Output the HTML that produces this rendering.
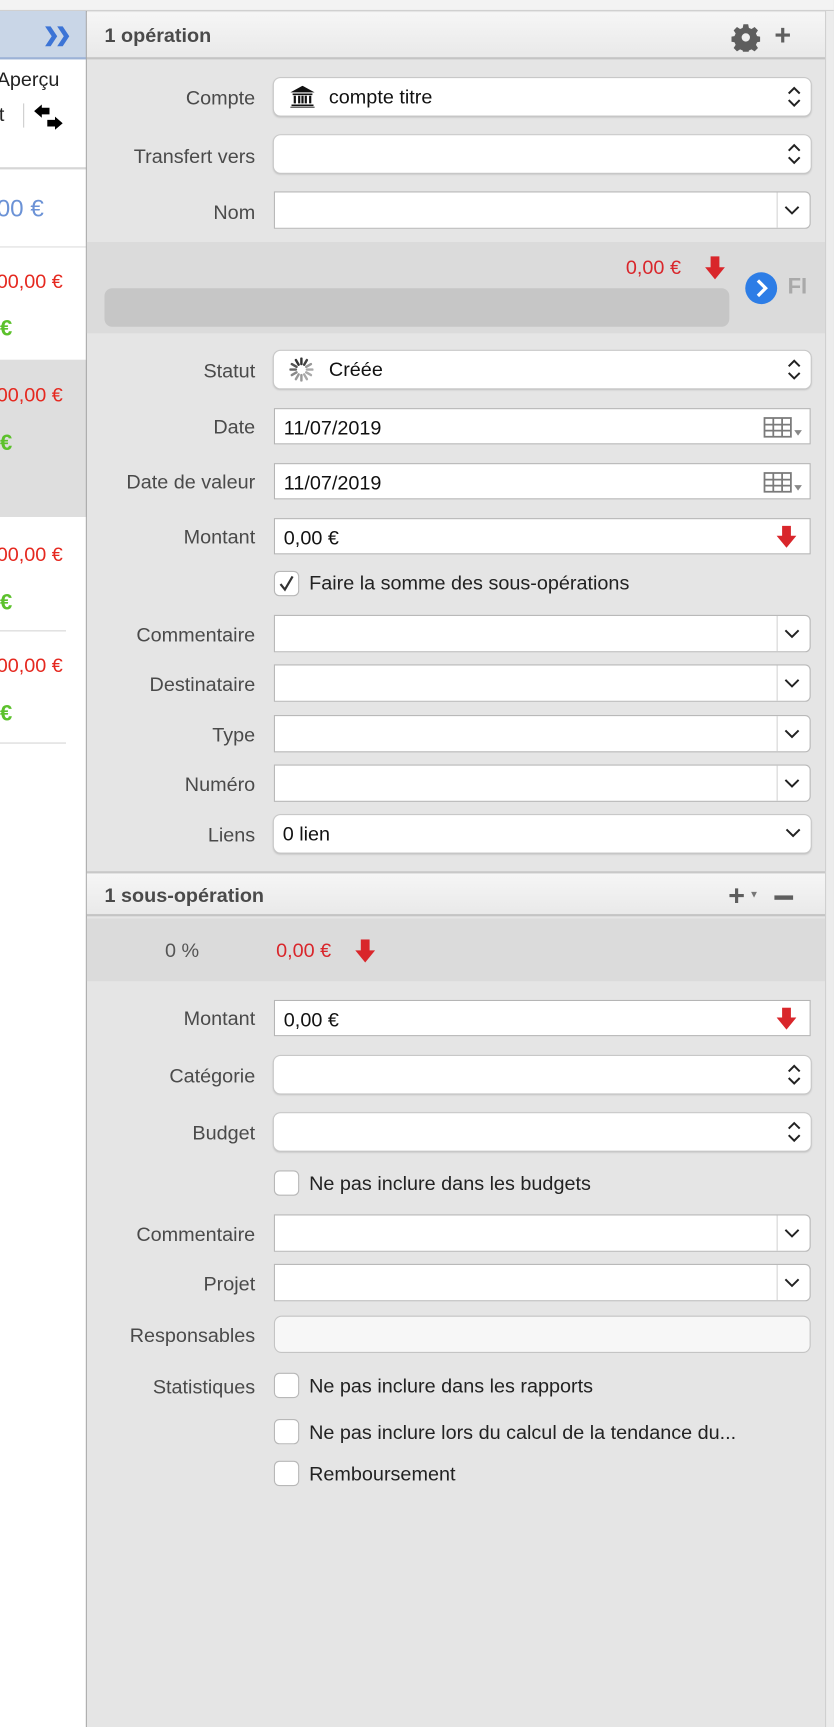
<!DOCTYPE html>
<html><head><meta charset="utf-8"><style>
*{box-sizing:border-box;margin:0;padding:0}
html,body{width:834px;height:1726px;overflow:hidden;background:#e5e5e5;font-family:"Liberation Sans",sans-serif}
#w{position:absolute;left:0;top:0;width:758px;height:1570px;transform:scale(1.1);transform-origin:0 0}
.a{position:absolute}
.lbl{position:absolute;right:526px;font-size:18px;color:#4a4a4a;text-align:right;white-space:nowrap;margin-top:2px}
.f{position:absolute;left:249px;width:488px;height:34px;background:#fff;font-size:18px;color:#111;padding-left:8px;line-height:34px}
.pop{border-radius:6px;box-shadow:0 0 0 1px #c8c8c8,0 1px 2px rgba(0,0,0,.25)}
.cmb{border:1px solid #b9b9b9;border-radius:0 5px 5px 0}
.cmb:after{content:"";position:absolute;right:29px;top:0;bottom:0;border-left:1px solid #d4d4d4}
.txt{border:1px solid #b5b5b5;height:33px}
.ud{position:absolute;right:8px;top:6px}
.dn{position:absolute;right:9px;top:11px}
.cb{position:absolute;left:249px;width:23px;height:23px;background:#fff;border:1px solid #b8b8b8;border-radius:5px}
.ct{position:absolute;left:281px;font-size:18px;color:#222;margin-top:1px}
</style></head><body><div id="w">
<div class="a" style="left:0;top:0;width:758px;height:10px;background:#f3f3f3;border-bottom:1px solid #d0d0d0"></div>
<div class="a" style="left:0;top:10px;width:79px;height:1560px;background:#fff"></div>
<div class="a" style="left:0;top:10px;width:79px;height:44px;background:#c9d6e7;border-bottom:2px solid #9cb2d6"></div>
<svg class="a" style="left:40px;top:23px" width="24" height="20" viewBox="0 0 24 20"><path d="M1 1h5l6 9-6 9H1l6-9z M12 1h5l6 9-6 9h-5l6-9z" fill="#3c74d6"/></svg>
<div class="a" style="left:-3px;top:62px;font-size:18px;color:#222">Aperçu</div>
<div class="a" style="left:-1px;top:94px;font-size:18px;color:#222">t</div>
<div class="a" style="left:21px;top:94px;width:1px;height:22px;background:#ccc"></div>
<svg class="a" style="left:31px;top:95px" width="26" height="24" viewBox="0 0 26 24"><path d="M0 6 L7 0 V3 H14 V9 H7 V12Z M26 17 L19 11 V14 H12 V20 H19 V23Z" fill="#000"/></svg>
<div class="a" style="left:0;top:152px;width:79px;height:2px;background:#d6d6d6"></div>
<div class="a" style="left:-3px;top:177px;font-size:22px;color:#6b92d6">00 €</div>
<div class="a" style="left:0;top:224px;width:79px;height:1px;background:#dcdcdc"></div>
<div class="a" style="left:-3px;top:246px;font-size:18px;color:#e5281f">00,00 €</div>
<div class="a" style="left:0;top:288px;font-size:20px;font-weight:bold;color:#5cc12c">€</div>
<div class="a" style="left:0;top:327px;width:79px;height:143px;background:#dedede"></div>
<div class="a" style="left:-3px;top:349px;font-size:18px;color:#e5281f">00,00 €</div>
<div class="a" style="left:0;top:392px;font-size:20px;font-weight:bold;color:#5cc12c">€</div>
<div class="a" style="left:-3px;top:494px;font-size:18px;color:#e5281f">00,00 €</div>
<div class="a" style="left:0;top:537px;font-size:20px;font-weight:bold;color:#5cc12c">€</div>
<div class="a" style="left:0;top:573px;width:60px;height:1px;background:#d6d6d6"></div>
<div class="a" style="left:-3px;top:595px;font-size:18px;color:#e5281f">00,00 €</div>
<div class="a" style="left:0;top:638px;font-size:20px;font-weight:bold;color:#5cc12c">€</div>
<div class="a" style="left:0;top:675px;width:60px;height:1px;background:#d6d6d6"></div>
<div class="a" style="left:78px;top:10px;width:1px;height:1560px;background:#a8a8a8"></div>
<div class="a" style="left:750px;top:10px;width:8px;height:1560px;background:#ececec;border-left:1px solid #d0d0d0"></div>
<div class="a" style="left:79px;top:11px;width:671px;height:43px;background:linear-gradient(#f6f6f6,#e9e9e9);border-bottom:2px solid #c4c4c4"></div>
<div class="a" style="left:95px;top:22px;font-size:18px;font-weight:bold;color:#4a4a4a">1 opération</div>
<svg class="a" style="left:665px;top:21px" width="26" height="26" viewBox="0 0 24 24"><path fill="#5e5e5e" d="M10 1h4l.6 3 2.2 1 2.6-1.7 2.8 2.8-1.7 2.6 1 2.2 3 .6v4l-3 .6-1 2.2 1.7 2.6-2.8 2.8-2.6-1.7-2.2 1-.6 3h-4l-.6-3-2.2-1-2.6 1.7-2.8-2.8 1.7-2.6-1-2.2-3-.6v-4l3-.6 1-2.2-1.7-2.6 2.8-2.8 2.6 1.7 2.2-1zM12 8.5a3.5 3.5 0 100 7 3.5 3.5 0 000-7z"/></svg>
<div class="a" style="left:704px;top:17px;font-size:26px;font-weight:bold;color:#5e5e5e">+</div>
<div class="lbl" style="top:77px">Compte</div>
<div class="f pop" style="top:71px;padding-left:50px">compte titre
<svg class="a" style="left:14px;top:7px" width="24" height="20" viewBox="0 0 24 20"><path d="M12 0 L23 6 H1Z M3 7h18v1.5H3z M4 9h2v7H4z M8 9h2v7H8z M14 9h2v7h-2z M18 9h2v7h-2z M11 9h2v7h-2z M2 17h20v1.5H2z M1 19h22v1H1z" fill="#111"/></svg>
<svg class="ud" width="14" height="22" viewBox="0 0 14 22"><path d="M2 8l5-5 5 5M2 14l5 5 5-5" stroke="#222" stroke-width="1.8" fill="none"/></svg></div>
<div class="lbl" style="top:130px">Transfert vers</div>
<div class="f pop" style="top:123px"><svg class="ud" width="14" height="22" viewBox="0 0 14 22"><path d="M2 8l5-5 5 5M2 14l5 5 5-5" stroke="#222" stroke-width="1.8" fill="none"/></svg></div>
<div class="lbl" style="top:181px">Nom</div>
<div class="f cmb" style="top:174px"><svg class="dn" width="14" height="10" viewBox="0 0 14 10"><path d="M1 2l6 6 6-6" stroke="#222" stroke-width="1.8" fill="none"/></svg></div>
<div class="a" style="left:79px;top:220px;width:671px;height:83px;background:#dbdbdb"></div>
<div class="a" style="left:569px;top:233px;font-size:18px;color:#d9262b">0,00 €</div>
<svg class="a" style="left:640px;top:233px" width="20" height="22" viewBox="0 0 20 22"><path d="M6 0h8v10h5L10 21 1 10h5z" fill="#d9262b"/></svg>
<div class="a" style="left:95px;top:262px;width:568px;height:35px;background:#c6c6c6;border-radius:7px"></div>
<svg class="a" style="left:677px;top:247px" width="30" height="30" viewBox="0 0 30 30"><circle cx="15" cy="15" r="14.5" fill="#2d7de6"/><path d="M12 8l7 7-7 7" stroke="#fff" stroke-width="3" fill="none"/></svg>
<div class="a" style="left:716px;top:250px;font-size:20px;font-weight:bold;color:#a9a9a9">FI</div>
<div class="lbl" style="top:325px">Statut</div>
<div class="f pop" style="top:319px;padding-left:50px">Créée
<svg class="a" style="left:14px;top:6px" width="22" height="22" viewBox="0 0 22 22"><g stroke-width="2.2" stroke-linecap="round"><path d="M11 1v5" stroke="#333"/><path d="M16 2.3l-2.5 4.3" stroke="#444"/><path d="M19.7 6l-4.3 2.5" stroke="#999"/><path d="M21 11h-5" stroke="#aaa"/><path d="M19.7 16l-4.3-2.5" stroke="#aaa"/><path d="M16 19.7l-2.5-4.3" stroke="#aaa"/><path d="M11 21v-5" stroke="#999"/><path d="M6 19.7l2.5-4.3" stroke="#999"/><path d="M2.3 16l4.3-2.5" stroke="#888"/><path d="M1 11h5" stroke="#666"/><path d="M2.3 6l4.3 2.5" stroke="#555"/><path d="M6 2.3l2.5 4.3" stroke="#333"/></g></svg>
<svg class="ud" width="14" height="22" viewBox="0 0 14 22"><path d="M2 8l5-5 5 5M2 14l5 5 5-5" stroke="#222" stroke-width="1.8" fill="none"/></svg></div>
<div class="lbl" style="top:376px">Date</div>
<div class="f txt" style="top:371px">11/07/2019<svg class="a" style="right:6px;top:7px" width="36" height="20" viewBox="0 0 36 20"><path d="M1 1h24v17H1z M1 7h24 M1 12.5h24 M9 1v17 M17 1v17" stroke="#7a7a7a" stroke-width="1.6" fill="none"/><path d="M28 12h7l-3.5 5z" fill="#888"/></svg></div>
<div class="lbl" style="top:426px">Date de valeur</div>
<div class="f txt" style="top:421px">11/07/2019<svg class="a" style="right:6px;top:7px" width="36" height="20" viewBox="0 0 36 20"><path d="M1 1h24v17H1z M1 7h24 M1 12.5h24 M9 1v17 M17 1v17" stroke="#7a7a7a" stroke-width="1.6" fill="none"/><path d="M28 12h7l-3.5 5z" fill="#888"/></svg></div>
<div class="lbl" style="top:476px">Montant</div>
<div class="f txt" style="top:471px">0,00 €<svg class="a" style="right:12px;top:6px" width="18" height="20" viewBox="0 0 18 20"><path d="M5 0h8v9h5L9 20 0 9h5z" fill="#d9262b"/></svg></div>
<div class="cb" style="top:519px"><svg width="21" height="21" viewBox="0 0 21 21" style="position:absolute;left:0;top:0"><path d="M5 11l4 5 7-12" stroke="#333" stroke-width="2" fill="none"/></svg></div>
<div class="ct" style="top:519px">Faire la somme des sous-opérations</div>
<div class="lbl" style="top:565px">Commentaire</div>
<div class="f cmb" style="top:559px"><svg class="dn" width="14" height="10" viewBox="0 0 14 10"><path d="M1 2l6 6 6-6" stroke="#222" stroke-width="1.8" fill="none"/></svg></div>
<div class="lbl" style="top:610px">Destinataire</div>
<div class="f cmb" style="top:604px"><svg class="dn" width="14" height="10" viewBox="0 0 14 10"><path d="M1 2l6 6 6-6" stroke="#222" stroke-width="1.8" fill="none"/></svg></div>
<div class="lbl" style="top:656px">Type</div>
<div class="f cmb" style="top:650px"><svg class="dn" width="14" height="10" viewBox="0 0 14 10"><path d="M1 2l6 6 6-6" stroke="#222" stroke-width="1.8" fill="none"/></svg></div>
<div class="lbl" style="top:701px">Numéro</div>
<div class="f cmb" style="top:695px"><svg class="dn" width="14" height="10" viewBox="0 0 14 10"><path d="M1 2l6 6 6-6" stroke="#222" stroke-width="1.8" fill="none"/></svg></div>
<div class="lbl" style="top:747px">Liens</div>
<div class="f pop" style="top:741px">0 lien<svg class="dn" width="14" height="10" viewBox="0 0 14 10"><path d="M1 2l6 6 6-6" stroke="#222" stroke-width="1.8" fill="none"/></svg></div>
<div class="a" style="left:79px;top:792px;width:671px;height:41px;background:linear-gradient(#f6f6f6,#e9e9e9);border-top:2px solid #c8c8c8;border-bottom:2px solid #c4c4c4"></div>
<div class="a" style="left:95px;top:804px;font-size:18px;font-weight:bold;color:#4a4a4a">1 sous-opération</div>
<div class="a" style="left:662px;top:799px;font-size:26px;font-weight:bold;color:#5e5e5e">+</div>
<div class="a" style="left:681px;top:808px;font-size:9px;color:#777">▼</div>
<div class="a" style="left:704px;top:814px;width:17px;height:4px;background:#5e5e5e"></div>
<div class="a" style="left:79px;top:835px;width:671px;height:57px;background:#dbdbdb"></div>
<div class="a" style="left:150px;top:854px;font-size:18px;color:#555">0 %</div>
<div class="a" style="left:251px;top:854px;font-size:18px;color:#d9262b">0,00 €</div>
<svg class="a" style="left:322px;top:854px" width="20" height="22" viewBox="0 0 20 22"><path d="M6 0h8v10h5L10 21 1 10h5z" fill="#d9262b"/></svg>
<div class="lbl" style="top:914px">Montant</div>
<div class="f txt" style="top:909px">0,00 €<svg class="a" style="right:12px;top:6px" width="18" height="20" viewBox="0 0 18 20"><path d="M5 0h8v9h5L9 20 0 9h5z" fill="#d9262b"/></svg></div>
<div class="lbl" style="top:966px">Catégorie</div>
<div class="f pop" style="top:960px"><svg class="ud" width="14" height="22" viewBox="0 0 14 22"><path d="M2 8l5-5 5 5M2 14l5 5 5-5" stroke="#222" stroke-width="1.8" fill="none"/></svg></div>
<div class="lbl" style="top:1018px">Budget</div>
<div class="f pop" style="top:1012px"><svg class="ud" width="14" height="22" viewBox="0 0 14 22"><path d="M2 8l5-5 5 5M2 14l5 5 5-5" stroke="#222" stroke-width="1.8" fill="none"/></svg></div>
<div class="cb" style="top:1064px"></div>
<div class="ct" style="top:1065px">Ne pas inclure dans les budgets</div>
<div class="lbl" style="top:1110px">Commentaire</div>
<div class="f cmb" style="top:1104px"><svg class="dn" width="14" height="10" viewBox="0 0 14 10"><path d="M1 2l6 6 6-6" stroke="#222" stroke-width="1.8" fill="none"/></svg></div>
<div class="lbl" style="top:1155px">Projet</div>
<div class="f cmb" style="top:1149px"><svg class="dn" width="14" height="10" viewBox="0 0 14 10"><path d="M1 2l6 6 6-6" stroke="#222" stroke-width="1.8" fill="none"/></svg></div>
<div class="lbl" style="top:1202px">Responsables</div>
<div class="f" style="top:1196px;background:#f7f7f7;border:1px solid #c4c4c4;border-radius:7px"></div>
<div class="lbl" style="top:1249px">Statistiques</div>
<div class="cb" style="top:1248px"></div>
<div class="ct" style="top:1249px">Ne pas inclure dans les rapports</div>
<div class="cb" style="top:1290px"></div>
<div class="ct" style="top:1291px">Ne pas inclure lors du calcul de la tendance du...</div>
<div class="cb" style="top:1328px"></div>
<div class="ct" style="top:1329px">Remboursement</div>
</div></body></html>
